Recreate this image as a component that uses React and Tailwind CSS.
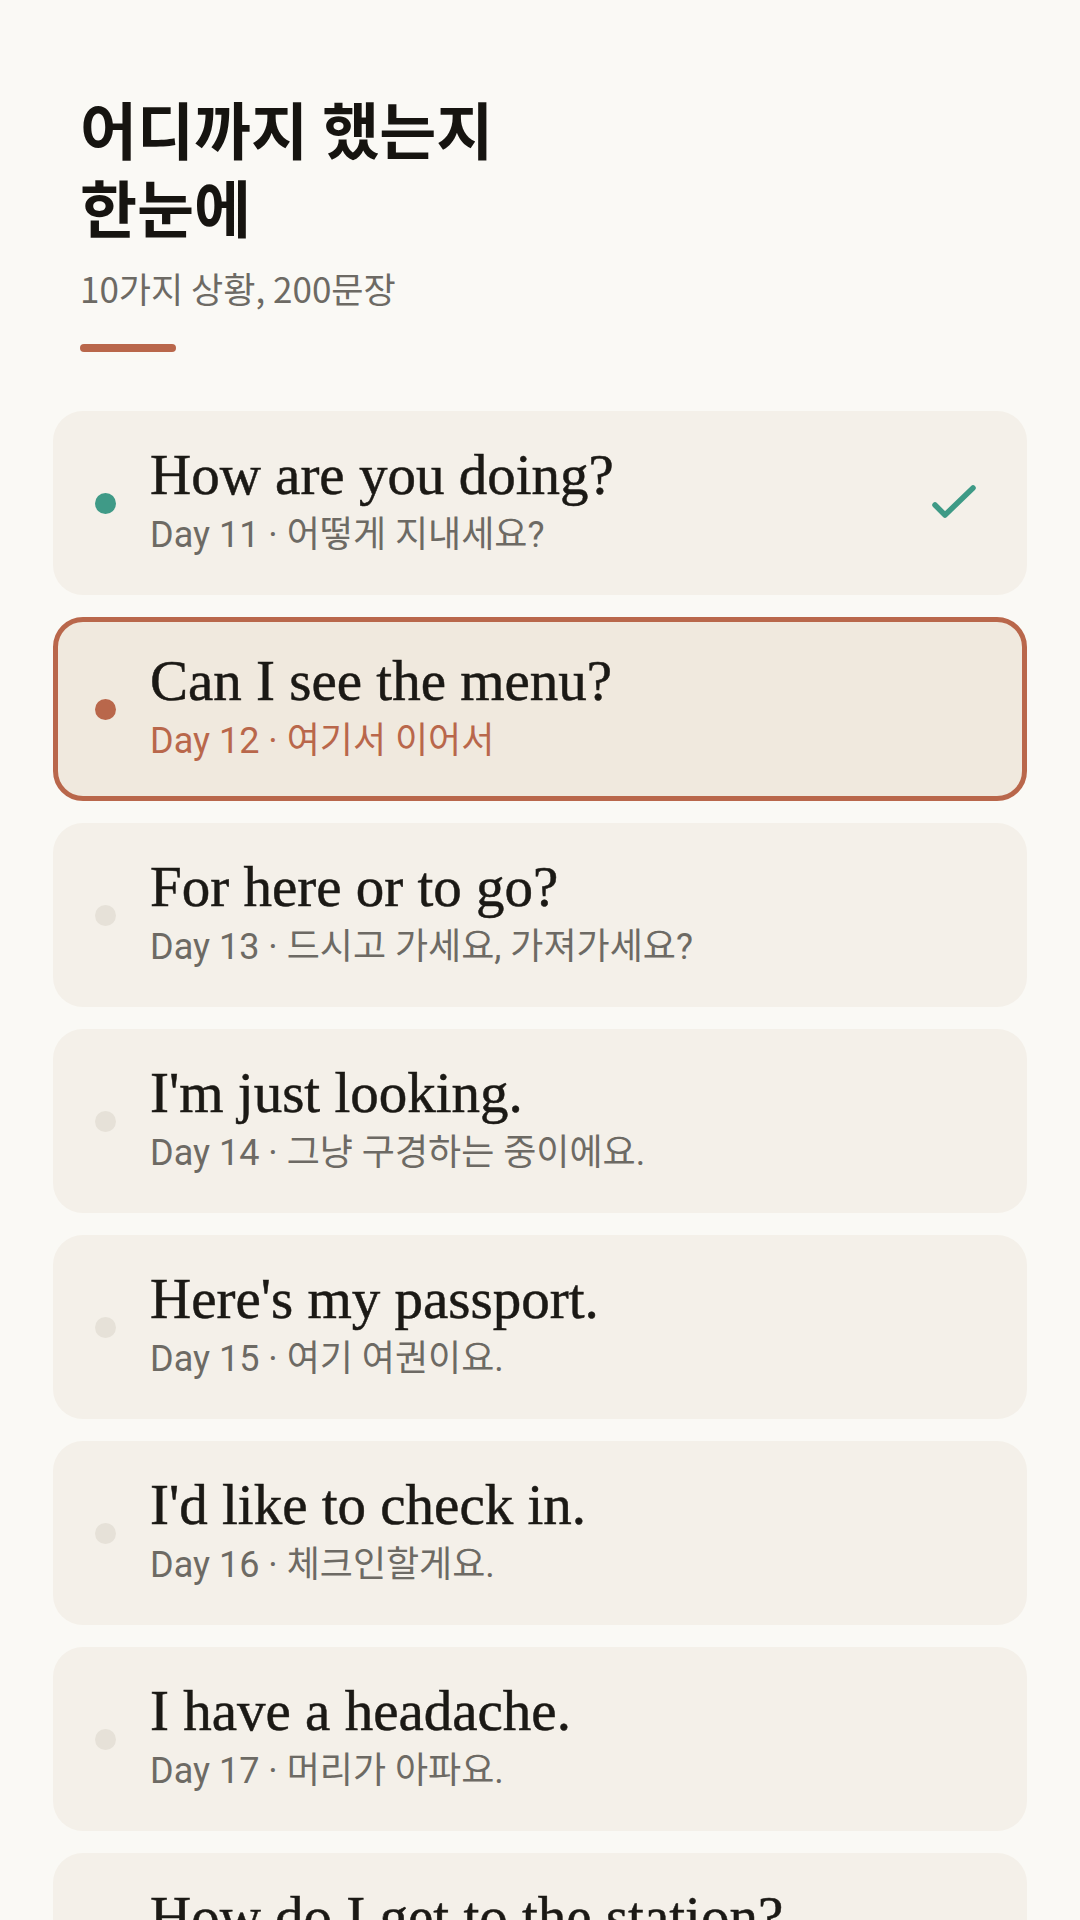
import React from 'react';

const lessons = [
  { day: 11, en: 'How are you doing?', ko: '어떻게 지내세요?', status: 'done' },
  { day: 12, en: 'Can I see the menu?', ko: '여기서 이어서', status: 'current' },
  { day: 13, en: 'For here or to go?', ko: '드시고 가세요, 가져가세요?', status: 'todo' },
  { day: 14, en: "I'm just looking.", ko: '그냥 구경하는 중이에요.', status: 'todo' },
  { day: 15, en: "Here's my passport.", ko: '여기 여권이요.', status: 'todo' },
  { day: 16, en: "I'd like to check in.", ko: '체크인할게요.', status: 'todo' },
  { day: 17, en: 'I have a headache.', ko: '머리가 아파요.', status: 'todo' },
  { day: 18, en: 'How do I get to the station?', ko: '역까지 어떻게 가요?', status: 'todo' },
  { day: 19, en: 'Could you take a picture?', ko: '사진 좀 찍어 주실래요?', status: 'todo' },
  { day: 20, en: 'Thank you for everything.', ko: '여러모로 감사했어요.', status: 'todo' },
];

const sans = "font-['Roboto','Noto_Sans_CJK_KR',sans-serif]";

function Check() {
  return (
    <svg width="46" height="36" viewBox="0 0 46 36" fill="none" className="shrink-0">
      <path d="M4 20 L14 30 L42 3" stroke="#3e9a86" strokeWidth="5.5" strokeLinecap="round" strokeLinejoin="round" />
    </svg>
  );
}

function LessonRow({ lesson }) {
  const current = lesson.status === 'current';
  const done = lesson.status === 'done';

  return (
    <div
      className={`flex items-center h-[184px] rounded-[30px] pr-[50px] ${
        current ? 'bg-[#f0e9de] border-[5px] border-[#b9674b] pl-[37px]' : 'bg-[#f4f0e9] pl-[42px]'
      }`}
    >
      <span
        className={`w-[21px] h-[21px] rounded-full shrink-0 ${
          done ? 'bg-[#3f9a87]' : current ? 'bg-[#b9674b]' : 'bg-[#e6e1d8]'
        }`}
      />
      <div className="ml-[34px] flex-1 min-w-0">
        <p className="font-['Liberation_Serif',serif] text-[57px] leading-[64px] text-[#1b1915] whitespace-nowrap [-webkit-text-stroke:0.5px_#1b1915]">
          {lesson.en}
        </p>
        <p className={`${sans} text-[36px] leading-[56px] whitespace-nowrap ${current ? 'text-[#b9674b]' : 'text-[#6d6a64]'}`}>
          Day {lesson.day} · {lesson.ko}
        </p>
      </div>
      {done && <Check />}
    </div>
  );
}

export default function App() {
  return (
    <div className="h-screen overflow-y-auto bg-[#faf9f5]">
      {/* Header */}
      <div className="px-[80px] pt-[89px]">
        <h1 className="font-['Noto_Sans_CJK_KR',sans-serif] font-bold text-[62px] leading-[78px] text-[#161410]">
          어디까지 했는지
          <br />
          한눈에
        </h1>
        <p className="mt-[20px] font-['Noto_Sans_CJK_KR',sans-serif] text-[35px] leading-[46px] text-[#6d6a64]">
          10가지 상황, 200문장
        </p>
        <div className="mt-[33px] w-[96px] h-[8px] rounded-full bg-[#b9674b]" />
      </div>

      {/* Lesson list */}
      <div className="px-[53px] mt-[59px] pb-[60px] flex flex-col gap-[22px]">
        {lessons.map(l => (
          <LessonRow key={l.day} lesson={l} />
        ))}
      </div>
    </div>
  );
}
